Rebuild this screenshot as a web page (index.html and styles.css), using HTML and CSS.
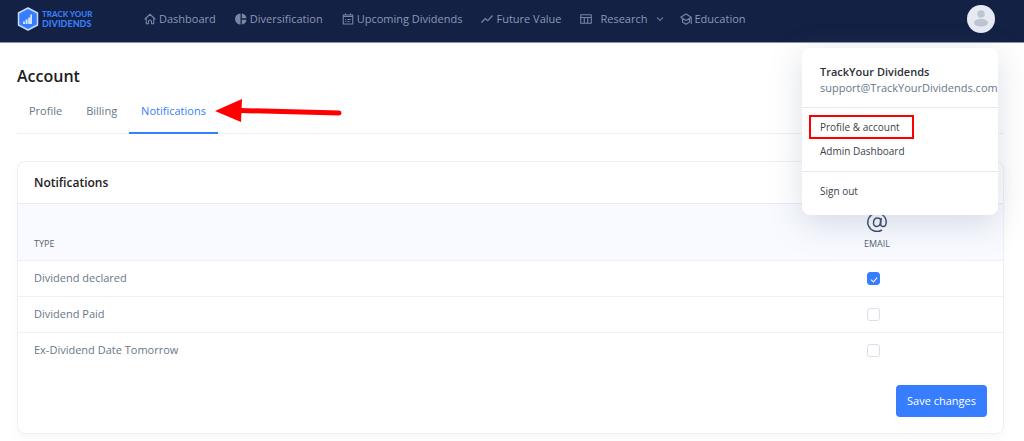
FILE: index.html
```html
<!DOCTYPE html>
<html lang="en">
<head>
<meta charset="utf-8">
<meta name="viewport" content="width=device-width, initial-scale=1">
<title>Account – Track Your Dividends</title>
<link rel="stylesheet" href="styles.css">
</head>
<body>
<header class="topbar">
  <a class="brand" href="#">
    <svg class="brand-mark" viewBox="0 0 22 24" aria-hidden="true">
      <path d="M11 1 20.500 6v12L11 23 1.500 18V6z" fill="#377dff" stroke="#c3dcfb" stroke-width="1.500" stroke-linejoin="round"/>
      <path d="M6 14.500h2V17H6zM8.600 12.500h2V17h-2zM11.200 10.500h2V17h-2zM13.300 7.500h1.700V17h-1.700z" fill="#d5e5ff"/>
    </svg>
    <span class="brand-name"><span class="brand-top">TRACK YOUR</span><span>DIVIDENDS</span></span>
  </a>
  <nav class="nav">
    <a class="nav-link" href="#">
      <svg class="icon" viewBox="0 0 24 24"><path d="M2 12 12 2.500 22 12M4.500 10v11.500H9V17a3 3 0 0 1 6 0v4.500h4.500V10" fill="none" stroke="currentColor" stroke-width="2.200" stroke-linejoin="round" stroke-linecap="round"/></svg>
      Dashboard
    </a>
    <a class="nav-link" href="#">
      <svg class="icon" viewBox="0 0 24 24"><path d="M11 1v22A11 11 0 0 1 11 1zM13.500 1A11 11 0 0 1 23 10.700h-9.500zM13.500 13.300H23A11 11 0 0 1 13.500 23z" fill="currentColor"/></svg>
      Diversification
    </a>
    <a class="nav-link" href="#">
      <svg class="icon" viewBox="0 0 24 24"><path d="M2.500 4h19v18h-19zM2.500 7h19M7 1v4M17 1v4M6.500 13h2M11 13h6.500M6.500 17h2M11 17h4" fill="none" stroke="currentColor" stroke-width="2.200" stroke-linejoin="round"/></svg>
      Upcoming Dividends
    </a>
    <a class="nav-link" href="#">
      <svg class="icon" viewBox="0 0 24 24"><path d="m1 19 7.500-8 5 4.500L23 5" fill="none" stroke="currentColor" stroke-width="2.400"/></svg>
      Future Value
    </a>
    <a class="nav-link nav-link-menu" href="#">
      <svg class="icon" viewBox="0 0 24 24"><path d="M1.500 3.500h21v17h-21zM1.500 9h21M8.500 9v11.500M15.500 9v11.500" fill="none" stroke="currentColor" stroke-width="2.200" stroke-linejoin="round"/></svg>
      <span>Research</span>
      <svg class="chevron" viewBox="0 0 8 8"><path d="m1 2.500 3 3 3-3" fill="none" stroke="currentColor" stroke-width="1.200"/></svg>
    </a>
    <a class="nav-link" href="#">
      <svg class="icon" viewBox="0 0 24 24"><path d="M12 2 1.500 8.500 12 15l10.500-6.500zM5 11v7l7 4.500 7-4.500v-7M22.500 9v13" fill="none" stroke="currentColor" stroke-width="2.200" stroke-linejoin="round"/></svg>
      Education
    </a>
  </nav>
  <div class="account">
    <button class="avatar" type="button" aria-label="Account menu">
      <svg viewBox="0 0 28 28" aria-hidden="true"><circle cx="14" cy="9" r="3.700" fill="#bdc5d1"/><ellipse cx="14" cy="17.700" rx="7" ry="3.900" fill="#bdc5d1"/></svg>
    </button>
    <div class="menu">
      <div class="menu-head">
        <strong class="menu-name">TrackYour Dividends</strong>
        <span class="menu-mail">support@TrackYourDividends.com</span>
      </div>
      <div class="menu-group">
        <a class="menu-item menu-item-marked" href="#">Profile &amp; account</a>
        <a class="menu-item" href="#">Admin Dashboard</a>
      </div>
      <div class="menu-group">
        <a class="menu-item" href="#">Sign out</a>
      </div>
    </div>
  </div>
</header>

<main class="page">
  <h1 class="title">Account</h1>
  <nav class="tabs">
    <a class="tab" href="#">Profile</a>
    <a class="tab" href="#">Billing</a>
    <a class="tab tab-active" href="#">Notifications
      <svg class="arrow" viewBox="0 0 128 26" aria-hidden="true"><path d="M25 12.500 124 15" stroke="#f00" stroke-width="5" stroke-linecap="round"/><path d="M0 13 27 1 26 24z" fill="#f00"/></svg>
    </a>
  </nav>

  <form class="card">
    <h2 class="card-title">Notifications</h2>
    <table class="table">
      <thead>
        <tr>
          <th class="type" scope="col">TYPE</th>
          <th class="email" scope="col">
            <svg class="at" viewBox="0 0 20 20" aria-hidden="true"><path d="M15 18A9.200 9.200 0 1 1 19.200 10c0 3-1.200 4.600-3 4.600s-2.700-1.200-2.500-3L14.200 6M13.600 9.500c-.2 3-1.800 4.900-4 4.900-1.900 0-3.100-1.400-3.100-3.500 0-2.900 1.700-5 4.100-5 2 0 3.200 1.400 3 3.600z" fill="none" stroke="#3b4868" stroke-width="1.500"/></svg>
            EMAIL
          </th>
        </tr>
      </thead>
      <tbody>
        <tr><td><label for="declared">Dividend declared</label></td><td class="email"><input class="check" type="checkbox" id="declared" checked></td></tr>
        <tr><td><label for="paid">Dividend Paid</label></td><td class="email"><input class="check" type="checkbox" id="paid"></td></tr>
        <tr><td><label for="exdate">Ex-Dividend Date Tomorrow</label></td><td class="email"><input class="check" type="checkbox" id="exdate"></td></tr>
      </tbody>
    </table>
    <div class="card-foot"><button class="save" type="submit">Save changes</button></div>
  </form>
</main>
</body>
</html>
```

FILE: styles.css
```css
* { box-sizing: border-box; }

body {
  margin: 0;
  background: #fff;
  color: #677788;
  font: 11px/16px "Open Sans", "Noto Sans", sans-serif;
}

a { color: inherit; text-decoration: none; }
svg { display: block; flex: none; }

.topbar {
  display: flex;
  align-items: center;
  height: 43px;
  padding: 0 29px 4px 17px;
  background: #132144;
  border-bottom: 1px solid #8795b5;
}

.brand { display: flex; align-items: center; gap: 3px; width: 127px; }
.brand-mark { width: 22px; height: 24px; }
.brand-name {
  display: flex;
  flex-direction: column;
  color: #377dff;
  font: 900 9px/9px Lato, sans-serif;
  white-space: nowrap;
}
.brand-top { font-size: 8px; }

.nav { display: flex; align-items: center; gap: 19px; flex: 1; color: #8b98b8; white-space: nowrap; }
.nav-link { display: flex; align-items: center; gap: 3px; }
.nav-link-menu { gap: 8px; margin-right: -3px; }
.icon { width: 12px; height: 12px; }
.nav-link .icon { opacity: .85; }
.chevron { width: 8px; height: 8px; opacity: .7; }

.account { position: relative; }
.avatar {
  display: block;
  width: 28px;
  height: 28px;
  padding: 0;
  border: 0;
  border-radius: 50%;
  background: #e7eaf3;
}

.menu {
  position: absolute;
  top: 43px;
  right: -3px;
  z-index: 2;
  width: 196px;
  background: #fff;
  border-radius: 8px;
  box-shadow: 0 8px 32px rgba(110, 125, 150, .25);
  color: #3c3f46;
}
.menu-head { display: flex; flex-direction: column; padding: 16px 0 11px 18px; }
.menu-name { color: #2c2f34; font-weight: 600; }
.menu-mail { color: #677788; }
.menu-group { padding: 7px 7px 8px; border-top: 1px solid #e7eaf3; }
.menu-group:last-child { padding-bottom: 12px; }
.menu-item {
  display: block;
  width: fit-content;
  padding: 2px 12px 2px 9px;
  border: 2px solid transparent;
  font-size: 10px;
}
.menu-item-marked { border-color: #f00; }

.page { padding: 23px 20px 8px 17px; }
.title { margin: 0; color: #1e2022; font-size: 16px; line-height: 20px; font-weight: 600; }

.tabs { display: flex; margin-top: 9px; border-bottom: 1px solid #edf0f7; }
.tab { position: relative; padding: 8px 12px 13px; margin-bottom: -1px; border-bottom: 2px solid transparent; }
.tab-active { color: #377dff; border-color: #377dff; }
.arrow { position: absolute; left: 100%; top: 3px; width: 128px; height: 26px; margin-left: -3px; }

.card {
  margin-top: 27px;
  border: 1px solid #edf0f7;
  border-radius: 8px;
  box-shadow: 0 4px 8px rgba(140, 152, 164, .08);
}
.card-title {
  margin: 0;
  padding: 13px 16px 12px;
  color: #1e2022;
  font-size: 12px;
  line-height: 16px;
  font-weight: 600;
}

.table { width: 100%; border-collapse: collapse; table-layout: fixed; }
.table th {
  padding: 8px 16px;
  background: #f8faff;
  border-top: 1px solid #e7eaf3;
  color: #566270;
  font-size: 9px;
  font-weight: 500;
  text-align: left;
  vertical-align: bottom;
}
.table td { height: 36px; padding: 0 16px 2px; border-top: 1px solid #edf0f7; }
.table .email { width: 252px; text-align: center; }
.at { width: 20px; height: 20px; margin: 0 auto 4px; }

.check {
  appearance: none;
  display: inline-grid;
  place-items: center;
  width: 13px;
  height: 13px;
  margin: 0 7px 0 0;
  border: 1px solid #d9deeb;
  border-radius: 3px;
  background: #fff;
  vertical-align: middle;
}
.check:checked { border-color: #377dff; background: #377dff; }
.check:checked::after {
  content: "";
  width: 3px;
  height: 5px;
  border: solid #fff;
  border-width: 0 1px 1px 0;
  transform: rotate(40deg);
}

.card-foot { display: flex; justify-content: flex-end; padding: 16px; }
.save {
  height: 32px;
  padding: 0 11px;
  border: 0;
  border-radius: 4px;
  background: #377dff;
  color: #fff;
  font: inherit;
}
```
